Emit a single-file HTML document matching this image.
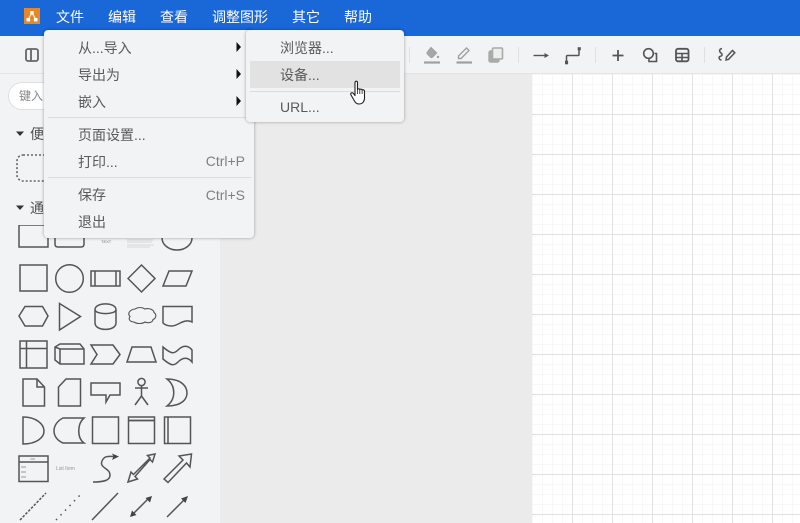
<!DOCTYPE html>
<html><head><meta charset="utf-8"><style>
html,body{margin:0;padding:0;width:800px;height:523px;overflow:hidden;background:#ebebeb}
body{position:relative;font-family:"Liberation Sans","Noto Sans CJK SC",sans-serif;font-size:14px;color:#505050}
.a{position:absolute}
.t{position:absolute;white-space:nowrap;line-height:16px}
.m{color:#fff;top:9px;font-size:14px}
.g{color:#5a5a5a}
.r{color:#808080}
</style></head><body>
<div class="a" style="left:0;top:0;width:800px;height:36px;background:#1a67d8"></div>
<div class="a" style="left:0;top:36px;width:800px;height:37px;background:#f1f3f4;border-bottom:1px solid #e2e4e6"></div>
<div class="a" style="left:0;top:74px;width:220px;height:449px;background:#f1f3f4"></div>
<div class="a" style="left:220px;top:74px;width:312px;height:449px;background:#ebebeb"></div>
<svg class="a" style="left:532px;top:74px" width="268" height="449">
<rect width="268" height="449" fill="#fff"/>
<defs>
<pattern id="n" width="10" height="10" patternUnits="userSpaceOnUse"><path d="M.5 0V10M0 .5H10" stroke="#f7f7f7" fill="none"/></pattern>
</defs>
<rect width="268" height="449" fill="url(#n)"/>
<g stroke="#e2e2e2" fill="none">
<path d="M40.500 0V449M80.500 0V449M120.500 0V449M160.500 0V449M200.500 0V449M240.500 0V449"/>
<path d="M0 40.500H268M0 80.500H268M0 120.500H268M0 160.500H268M0 200.500H268M0 240.500H268M0 280.500H268M0 320.500H268M0 360.500H268M0 400.500H268M0 440.500H268"/>
</g>
</svg>

<!-- Logo -->
<svg class="a" style="left:24px;top:8px" width="16" height="16" viewBox="0 0 16 16"><rect width="16" height="16" fill="#e8862a"/><g fill="#fff"><rect x="6.200" y="3" width="3.600" height="3.400"/><rect x="2.500" y="10" width="3.600" height="3.400"/><rect x="9.900" y="10" width="3.600" height="3.400"/></g><path d="M7.500 6 4.500 10.500M8.500 6 11.500 10.500" stroke="#fff" stroke-width="1"/></svg>

<div class="t m" style="left:56px">文件</div>
<div class="t m" style="left:108px">编辑</div>
<div class="t m" style="left:160px">查看</div>
<div class="t m" style="left:212px">调整图形</div>
<div class="t m" style="left:292px">其它</div>
<div class="t m" style="left:344px">帮助</div>

<!-- toolbar -->
<svg class="a" style="left:0;top:36px" width="800" height="37" fill="none" stroke="#666" stroke-width="1.800">
<rect x="26" y="13" width="12" height="12" rx="2"/><path d="M31 13V25"/>
<path d="M409.500 11V27M518.500 11V27M595.500 11V27M704.500 11V27" stroke="#e0e0e0" stroke-width="1"/>
<g stroke="#a0a0a0"><path d="M424 26.500H440" stroke-width="2.200"/><path d="M431 11.500l5.500 5.500-4 4a1.500 1.500 0 0 1-2 0l-3-3a1.500 1.500 0 0 1 0-2z" fill="#a8a8a8" stroke-width="1.200"/><circle cx="438" cy="21" r="1.200" fill="#a0a0a0" stroke="none"/></g>
<g stroke="#a0a0a0"><path d="M456.500 26.500H472" stroke-width="2.200"/><path d="M458.500 22.500v-2.500l8-8 2.500 2.500-8 8z" stroke-width="1.400"/></g>
<g fill="#aaa" stroke="#aaa"><rect x="489" y="15" width="10" height="11" rx="1.500" stroke-width="1.400"/><rect x="492.500" y="12" width="10" height="11" rx="1" fill="#eceded" stroke-width="1.600"/></g>
<path d="M533.500 19.500H546" stroke="#555" stroke-width="1.400"/><path d="M549 19.500l-4.500-2.500v5z" fill="#555" stroke="none"/>
<path d="M566.500 25V20.500q0-1 1-1H578q1 0 1-1V13" stroke="#555" stroke-width="1.500"/>
<rect x="565.300" y="25" width="2.500" height="3" fill="#555" stroke="#555" stroke-width=".6"/><rect x="578" y="11.500" width="2.500" height="2.500" fill="#555" stroke="#555" stroke-width=".6"/>
<path d="M618 14V25M612.500 19.500H623.500" stroke="#555" stroke-width="1.800"/>
<circle cx="648.500" cy="17.500" r="4.800" stroke="#555" stroke-width="1.600"/><path d="M654.500 17.500H656.500V25.500H649V23" stroke="#555" stroke-width="1.600"/>
<rect x="676" y="12.800" width="12.500" height="12.500" rx="2" stroke="#555" stroke-width="1.800"/><path d="M676 17.500H688M676 21.500H688M682 17.500V25" stroke="#555" stroke-width="1.600"/>
<path d="M722 12.500c-3 .5-3 3-1 4.500s1 3-1 3.500c-1.500.5-1 3.500 1.500 3.500" stroke="#555" stroke-width="1.500"/>
<path d="M726 24l.5-3 6-6.500 2.300 2.300-6.200 6.500z" stroke="#555" stroke-width="1.500"/>
</svg>

<!-- sidebar -->
<div class="a" style="left:8px;top:82px;width:100px;height:26px;border:1px solid #e0e0e0;border-radius:14px;background:#fff"></div>
<div class="t" style="left:19px;top:88px;font-size:12px;color:#888">键入</div>
<svg class="a" style="left:15px;top:130px" width="10" height="8"><path d="M1 1.500H9L5 6z" fill="#333"/></svg>
<div class="t" style="left:30px;top:126px">便</div>
<svg class="a" style="left:15px;top:204px" width="10" height="8"><path d="M1 1.500H9L5 6z" fill="#333"/></svg>
<div class="t" style="left:30px;top:200px">通</div>
<svg class="a" style="left:0;top:150px" width="50" height="35"><rect x="17" y="5" width="40" height="26" rx="6" fill="none" stroke="#666" stroke-width="1.600" stroke-dasharray="2 2"/></svg>

<svg class="a" style="left:0;top:225px" width="220" height="298" fill="none" stroke="#555" stroke-width="1.500">
<g transform="translate(0,-225)">
<!-- row 0 -->
<rect x="19" y="225" width="29" height="22"/>
<path d="M55 225V244q0 3 3 3H81q3 0 3-3V225"/>
<text x="101" y="243" font-size="4" fill="#777" stroke="none" font-family="Liberation Sans">TEXT</text>
<path d="M127 240H153M127 242H152M127 245H154M127 247H150" stroke="#bbb" stroke-width=".6"/>
<ellipse cx="177" cy="238" rx="15" ry="12"/>
<!-- row 1 -->
<rect x="20" y="265" width="27" height="26"/>
<circle cx="69.500" cy="278.500" r="13.800"/>
<rect x="91" y="271" width="29" height="15"/><path d="M95 271V286M116 271V286"/>
<path d="M141.500 265 155 278.500 141.500 292 128 278.500z"/>
<path d="M169 271H192L186 286H163z"/>
<!-- row 2 -->
<path d="M19 316 25 306.500H42.500L48 316 42.500 326H25z"/>
<path d="M59.500 303.500 80.500 316.500 59.500 330z"/>
<path d="M95 309.500C95 302 116 302 116 309.500V323C116 331.500 95 331.500 95 323zM95 309.500C95 315 116 315 116 309.500"/>
<path transform="translate(0,2)" d="M135 307c3-2 7-2 10 0 4-1.500 9 1 9 3.500 3 2 2 6-1 7 0 3-5 4-8 2.500-3 2-8 2-11 0-4 0-6-3-4-5.500-3-3 0-7 5-7.500z" stroke-width="1.100"/>
<path d="M163 306.500H192V322C184 318 178 326 172 326 168 326 165 325 163 323z"/>
<!-- row 3 -->
<rect x="20" y="341" width="27" height="27"/><path d="M20 348.500H47M26.500 341V368"/>
<path d="M55 347 60 344H80L84 349V364H60L55 360zM60 349H84M60 349 55 347M60 349V364"/>
<path d="M91 345H113L120 354.500 113 364H91L97 354.500z"/>
<path d="M132 347H151L156 362H127z"/>
<path d="M163 347c8 7 11 7 15 3 5-5 10-5 14 0V362c-4-5-9-5-14 0-4 4-7 4-15-3z"/>
<!-- row 4 -->
<path d="M23 379H37L44.500 387V406H23zM37 379V387H44.500"/>
<path d="M66 379H80.500V406H58.500V387z"/>
<path d="M91 383H120V395H110L106 402V395H91z"/>
<circle cx="141.500" cy="382" r="3.600"/><path d="M141.500 385.500V396M135 388H148M141.500 396 135 405M141.500 396 148 405"/>
<path d="M167 379C182 379 187 387 187 393 187 399 182 406 167 406 176 399 176 386 167 379z"/>
<!-- row 5 -->
<path d="M23 417C36 417 44 424 44 431 44 438 36 444 23 444z"/>
<path d="M63 418H84C77 424 77 438 84 443H63C51 438 51 424 63 418z"/>
<rect x="92.500" y="417" width="26" height="26.500"/>
<rect x="128.500" y="417" width="26" height="26.500"/><path d="M128.500 420.500H154.500" stroke-width="1.800"/>
<rect x="164.500" y="417" width="26" height="26.500"/><path d="M168 417V443.500"/>
<!-- row 6 -->
<rect x="19" y="456" width="29" height="25.500"/><path d="M19 462H48" stroke-width="1.600"/>
<path d="M21 467H26M21 472H26M21 477H26" stroke="#999" stroke-width="1"/>
<path d="M30.500 459H35" stroke="#999" stroke-width="1"/>
<text x="56" y="470" font-size="5" fill="#999" stroke="none" font-family="Liberation Sans">List Item</text>
<path d="M93 482C105 482 110 480 110 475 110 468 99 468 102 461 104 456 108 456 114 456.500"/><path d="M119 456.500 112 453.500 113.500 456.500 112 460z" fill="#444" stroke="none"/>
<path d="M128 482 131 472 133.500 474.500 150 458 147.500 455.500 155 454 152.500 462 150 459.500 135 476.500 137.500 479z"/>
<path d="M164 479 183 460 179 456 191.500 454 190 467 186.500 463 168 482.500z"/>
<!-- row 7 -->
<path d="M20 520 46 493" stroke-dasharray="2.500 1.500"/>
<path d="M56 520 82 493" stroke-dasharray="1.500 5"/>
<path d="M92 520 118 493"/>
<path d="M133 514 148 499"/><path d="M130 517 136.500 515 132 510.500zM152 496 145.500 498 150 502.500z" fill="#444" stroke="none"/>
<path d="M167 517 184 500"/><path d="M188 496 181 498.500 185.500 503z" fill="#444" stroke="none"/>
</g>
</svg>

<!-- Menu -->
<div class="a" style="left:44px;top:30px;width:210px;height:208px;background:#f2f3f5;border-radius:4px;box-shadow:0 0 3px rgba(0,0,0,.35)"></div>
<div class="a" style="left:48px;top:117px;width:203px;height:1px;background:#dcdcdc"></div>
<div class="a" style="left:48px;top:177px;width:203px;height:1px;background:#dcdcdc"></div>
<div class="t g" style="left:78px;top:40px">从...导入</div>
<div class="t g" style="left:78px;top:67px">导出为</div>
<div class="t g" style="left:78px;top:94px">嵌入</div>
<div class="t g" style="left:78px;top:127px">页面设置...</div>
<div class="t g" style="left:78px;top:154px">打印...</div>
<div class="t g" style="left:78px;top:187px">保存</div>
<div class="t g" style="left:78px;top:214px">退出</div>
<div class="t r" style="right:555px;top:153px;font-size:14px">Ctrl+P</div>
<div class="t r" style="right:555px;top:187px;font-size:14px">Ctrl+S</div>
<svg class="a" style="left:235px;top:42px" width="8" height="66"><path d="M1.500 0 6 5 1.500 10zM1.500 27 6 32 1.500 37zM1.500 54 6 59 1.500 64z" fill="#111"/></svg>

<!-- Submenu -->
<div class="a" style="left:246px;top:30px;width:158px;height:92px;background:#f2f3f5;border-radius:4px;box-shadow:0 0 3px rgba(0,0,0,.35)"></div>
<div class="a" style="left:250px;top:61px;width:150px;height:27px;background:#e2e2e2"></div>
<div class="a" style="left:250px;top:91px;width:150px;height:1px;background:#dcdcdc"></div>
<div class="t g" style="left:280px;top:40px">浏览器...</div>
<div class="t g" style="left:280px;top:67px">设备...</div>
<div class="t g" style="left:280px;top:99px;font-size:14px">URL...</div>

<!-- Cursor -->
<svg class="a" style="left:349px;top:80px" width="20" height="26" viewBox="0 0 20 26"><path d="M6 2.500c0-1.800 2.500-1.800 2.500 0V9.500c0-1 2.300-1 2.300 .3 0-1 2.300-1 2.300 .5 0-1 2.400-.7 2.400 1V18c0 3.500-2 6-5.500 6H10c-2.500 0-3.500-1-4.500-3L2 15c-1-2 1-3 2.500-1.500L6 15.500z" fill="#fff" stroke="#222" stroke-width="1.100" stroke-linejoin="round"/><path d="M8.500 9.500V14M10.800 10V14M13.100 10.500V14" stroke="#222" stroke-width=".8"/></svg>
</body></html>
